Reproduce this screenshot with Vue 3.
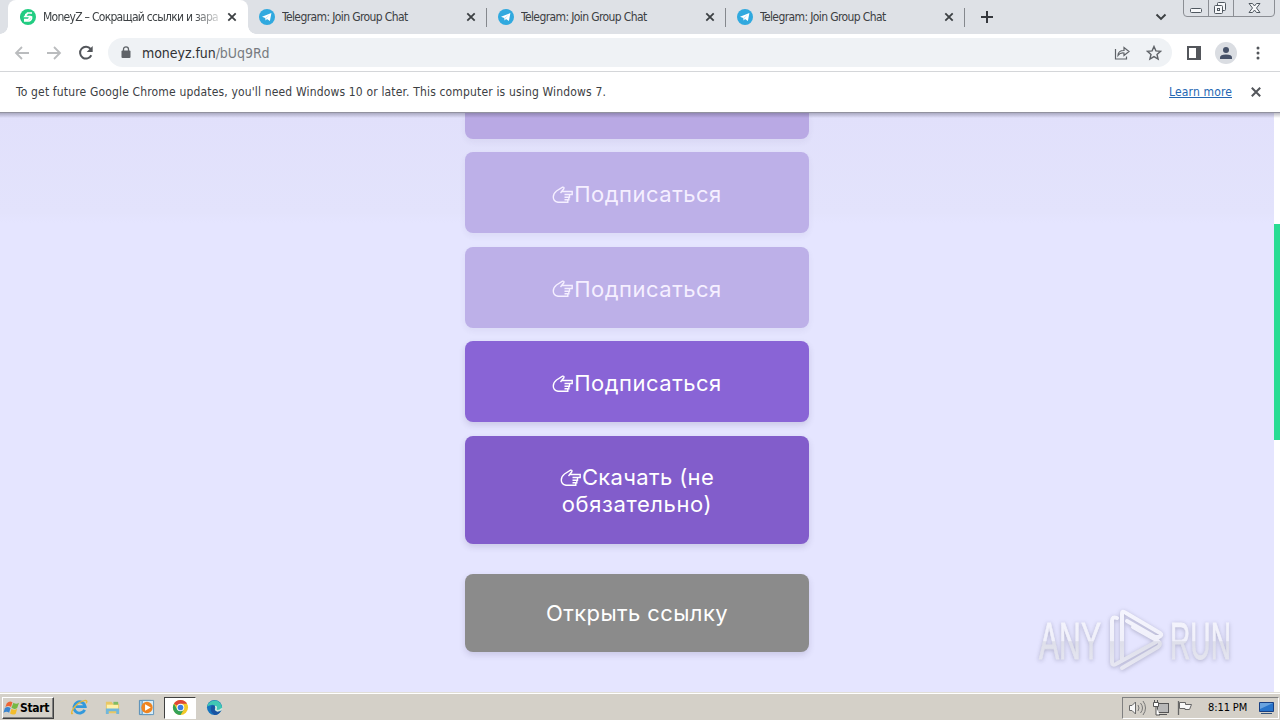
<template>
  <div class="screen">
    <header class="tab-strip">
      <div v-for="(tab, i) in tabs" :key="i" class="tab" :class="{ active: i === 0 }">
        <svg v-if="i === 0" class="favicon" viewBox="0 0 16 16">
          <circle cx="8" cy="8" r="8" fill="#22cd82" />
          <path d="M1 5A8 8 0 0 0 5 15 10 10 0 0 1 1 5" fill="#16ad77" />
          <path d="M12 4H7.5L5 7.5h4.5Q10 10 8 10.5H4M5 5.5h2M4 12h5q3-1 2.5-4L9 7.2" fill="none" stroke="#fff" stroke-width="1.7" />
        </svg>
        <svg v-else class="favicon" viewBox="0 0 16 16">
          <circle cx="8" cy="8" r="8" fill="#30a9df" />
          <path d="M3 7.8 12.4 4 10.9 12 8 10 6.7 11.4 6.2 8.9Z" fill="#fff" />
          <path d="M6.3 9 11 5.4 7.3 9.3 6.7 11.2Z" fill="#bddff1" />
        </svg>
        <span class="tab-title"><span :class="i === 0 ? 'title-ru' : 'title-en'">{{ tab }}</span></span>
        <svg class="tab-close" viewBox="0 0 10 10"><path d="m1.3 1.3 7.4 7.4m0-7.4L1.3 8.7" /></svg>
      </div>
      <svg class="new-tab" viewBox="0 0 14 14"><path d="M7 1v12M1 7h12" /></svg>
      <svg class="tab-search" viewBox="0 0 12 8"><path d="m1.5 1.5 4.5 4.4 4.5-4.4" /></svg>
      <div class="window-controls">
        <svg viewBox="0 0 94 17">
          <path d="M.5 0v13q0 3.5 3.5 3.5h84q3.5 0 3.5-3.5V0M25.500 0v16M50.500 0v16" fill="none" stroke="#8b8e94" />
          <g fill="#f7f8fa" stroke="#505860">
            <rect x="7.500" y="8.500" width="11" height="4" rx="1" />
            <rect x="34.500" y="2.500" width="8" height="8" rx="1" />
            <rect x="31.500" y="5.500" width="8" height="8" rx="1" />
            <rect x="34.500" y="8.500" width="2" height="2" />
            <path d="M66 3.500h3.500l2 2.500 2-2.500H77L73.500 8l3.500 4.500h-3.500l-2-2.500-2 2.500H66L69.500 8Z" />
          </g>
        </svg>
      </div>
    </header>

    <div class="toolbar">
      <svg class="nav" viewBox="0 0 16 16"><path d="M15 8H2m6-6L2 8l6 6" stroke="#babcbe" /></svg>
      <svg class="nav" viewBox="0 0 16 16"><path d="M1 8h13M8 2l6 6-6 6" stroke="#babcbe" /></svg>
      <svg class="nav" viewBox="0 0 16 16"><path d="M13.300 10.300A5.900 5.900 0 1 1 12.600 4" stroke="#53565b" stroke-width="2" /><path d="M14.700 1v6h-6Z" fill="#53565b" /></svg>
      <div class="address">
        <svg class="lock" viewBox="0 0 10 13"><rect x=".5" y="4.500" width="9" height="7.500" rx="1" fill="#5f6368" /><path d="M2.500 5V3.300a2.500 2.500 0 0 1 5 0V5" fill="none" stroke="#5f6368" stroke-width="1.300" /></svg>
        <span class="url">moneyz.fun<span class="path">/bUq9Rd</span></span>
        <svg class="share" viewBox="0 0 16 16"><path d="M1.500 4v10h11v-2.500M4 10.500q0-5 6-5V2.500l5 4-5 4V8Q6 7.500 4 10.500Z" fill="none" stroke="#5f6368" stroke-width="1.200" /></svg>
        <svg class="star" viewBox="0 0 16 16"><path d="m8 1.500 1.900 4.400 4.700.4L11 9.400l1.100 4.700L8 11.600l-4.100 2.500L5 9.400 1.400 6.300l4.700-.4Z" fill="none" stroke="#5f6368" stroke-width="1.400" /></svg>
      </div>
      <svg class="panel" viewBox="0 0 14 14"><path d="M1 1h12v12H1Z" fill="none" stroke="#53565b" stroke-width="2" /><path d="M9 0h5v14H9Z" fill="#53565b" /></svg>
      <svg class="avatar" viewBox="0 0 22 22"><circle cx="11" cy="11" r="11" fill="#dadde2" /><circle cx="11" cy="8" r="3" fill="#465168" /><path d="M5 17v-1.500q0-3 6-3t6 3V17Z" fill="#465168" /></svg>
      <svg class="menu" viewBox="0 0 4 14"><circle cx="2" cy="2" r="1.500" /><circle cx="2" cy="7" r="1.500" /><circle cx="2" cy="12" r="1.500" /></svg>
    </div>

    <div class="infobar">
      <span class="info-text">To get future Google Chrome updates, you'll need Windows 10 or later. This computer is using Windows 7.</span>
      <a class="learn">Learn more</a>
      <svg class="info-close" viewBox="0 0 10 10"><path d="m.8.8 8.400 8.400m0-8.400L.8 9.200" /></svg>
    </div>

    <main class="page">
      <div class="content">
        <div class="card clipped"></div>
        <div v-for="(card, i) in cards" :key="i" class="card" :class="card.kind">
          <p v-for="(line, n) in card.lines" :key="n">
            <svg v-if="card.hand && n === 0" class="hand" viewBox="0 0 22 18">
              <path d="M9 5.500H20.200V8.500H12.500M17.500 8.500V11.200H12.500M16.800 11.200V13.800H12.500M15.800 13.800V16.300H6Q1.300 15.500 1.300 11 1.300 7.500 4.500 5L10.500 1.200Q12.600.8 11.800 2.800L8.500 7" />
            </svg><span :class="card.kind + '-' + n">{{ line }}</span>
          </p>
        </div>
      </div>
      <div class="scrollbar"><div class="thumb"></div></div>
      <svg class="watermark" viewBox="0 0 200 70">
        <defs>
          <linearGradient id="silver" gradientUnits="userSpaceOnUse" x1="0" y1="0" x2="0" y2="66">
            <stop offset="0" stop-color="#f6f6fe" />
            <stop offset=".53" stop-color="#f0f0fa" />
            <stop offset=".54" stop-color="#dedfea" />
            <stop offset="1" stop-color="#e9e9f4" />
          </linearGradient>
        </defs>
        <g fill="none" stroke="url(#silver)" stroke-width="4" stroke-linejoin="round" stroke-linecap="round">
          <path d="M80 12Q75 10 75 15V56Q75 60 79 58L119 36M85 54V8Q85 4 89 7L123 27Q126 29 122 31H118L90 15M85 62 121 41Q125 38 121 35L96 21" />
        </g>
        <g fill="url(#silver)" stroke="url(#silver)" stroke-width=".8" class="mark-text">
          <text x="2" y="53" textLength="62" lengthAdjust="spacingAndGlyphs">ANY</text>
          <text x="133" y="53" textLength="61" lengthAdjust="spacingAndGlyphs">RUN</text>
        </g>
      </svg>
    </main>

    <footer class="taskbar">
      <div class="start">
        <svg viewBox="0 0 18 16"><path d="M4 3q3-3 6-1L8.500 7Q6 5 2.500 7Z" fill="#ed6535" /><path d="M11 2.500q3 2 6 0L15 8q-3 2-6-.3Z" fill="#76b843" /><path d="M2 8q3-2 6 0l-1.500 5Q4 11 .5 13Z" fill="#3a85cf" /><path d="M9 8.800q3 2 6 0L13.500 14q-3 2-6-.3Z" fill="#f3bd2d" /></svg>
        <span>Start</span>
      </div>
      <div class="task"><svg viewBox="0 0 18 18"><path d="M14.500 11.500A6 6 0 1 1 15 8H5" fill="none" stroke="#3299dc" stroke-width="3" /><path d="M2 15Q-1 17 2 11 7 3 15 1.500q3 0 1 3" fill="none" stroke="#e7b83b" stroke-width="1.400" /></svg></div>
      <div class="task"><svg viewBox="0 0 18 18"><path d="M2 3h6l1.500 2H16v10H2Z" fill="#e8c765" /><path d="M3 6h12v6H3Z" fill="#fff1a8" /><path d="M10 3h5v3h-5Z" fill="#7fbc64" /><path d="M2 10h14v6h-3v-3H5v3H2Z" fill="#71b7dc" /></svg></div>
      <div class="task"><svg viewBox="0 0 18 18"><path d="M1.500 1.500h12v15h-12Z" fill="#a7cee8" stroke="#528ab5" /><path d="M4.500 1.500h12v15h-12Z" fill="#d8edf8" stroke="#5c94bb" /><circle cx="9.500" cy="9" r="6" fill="#ef8420" /><path d="m7.500 5.500 6 3.500-6 3.500Z" fill="#fff" /></svg></div>
      <div class="task pressed"><svg viewBox="0 0 18 18"><circle cx="9" cy="9" r="8" fill="#f3c929" /><path d="M9 9 2.070 5A8 8 0 0 1 15.930 5H9Z" fill="#df4638" /><path d="M2.070 5A8 8 0 0 0 9 17l3.500-6L9 9 5.500 11Z" fill="#35a257" /><circle cx="9" cy="9" r="4" fill="#fff" /><circle cx="9" cy="9" r="3" fill="#3c7de2" /></svg></div>
      <div class="task"><svg viewBox="0 0 18 18"><circle cx="9" cy="9" r="8" fill="#1674bd" /><path d="M1.200 8A8 8 0 0 1 17 9q0 4-5 4-3 0-3-2 2-1 1-3-2-4-8.800 0Z" fill="#40c7b4" /><path d="M6 7q4-1 5 2-2 0-2 2 2 3 7 1-2 5-7 5-6-4-3-10Z" fill="#1953a2" /><path d="M9.500 8q2 0 1 2.500Q10 12 12 12.500q3 0 5-2.500" fill="none" stroke="#d3e8df" stroke-width="1.800" /></svg></div>
      <div class="tray">
        <svg class="tray-icon" viewBox="0 0 18 18"><path d="M1.500 6.500H4L7.500 3v12L4 11.500H1.500Z" fill="#f8f8f8" stroke="#696969" /><path d="M10 6q2 3 0 6m2.500-8q4 5 0 10m2.500-12q5 7 0 14" fill="none" stroke="#777" /></svg>
        <svg class="tray-icon net" viewBox="0 0 18 18"><rect x="5.500" y="4.500" width="11" height="9" fill="#b8b8b8" stroke="#555" /><path d="M7 15.500h8M1.500 3.500h5v4h-5ZM4 8v8h4M2.500 1v3m3-3v3" fill="#fff" stroke="#555" /></svg>
        <svg class="tray-icon flag" viewBox="0 0 18 18"><path d="M2.500 2v14" stroke="#666" stroke-width="1.300" /><path d="M3.500 3.500h6v2h6l-2 5H9v-1H3.500Z" fill="#f8f8f8" stroke="#666" /></svg>
        <span class="clock">8:11 PM</span>
        <svg class="desktop" viewBox="0 0 15 14"><path d="M.5 1.500h14v9H.5Z" fill="#2874ca" stroke="#183f82" /><path d="M1 2h13L1 8Z" fill="#69a3df" /><path d="M2 12.500h11" stroke="#35557b" /></svg>
      </div>
    </footer>
  </div>
</template>

<script setup>
const tabs = [
  'MoneyZ – Сокращай ссылки и зара',
  'Telegram: Join Group Chat',
  'Telegram: Join Group Chat',
  'Telegram: Join Group Chat'
]

const cards = [
  { kind: 'done', hand: true, lines: ['Подписаться'] },
  { kind: 'done', hand: true, lines: ['Подписаться'] },
  { kind: 'subscribe', hand: true, lines: ['Подписаться'] },
  { kind: 'download', hand: true, lines: ['Скачать (не', 'обязательно)'] },
  { kind: 'open', hand: false, lines: ['Открыть ссылку'] }
]
</script>

<style>
body {
  overflow: hidden;
}
</style>

<style scoped>
* {
  box-sizing: border-box;
}

svg {
  display: block;
  flex-shrink: 0;
}

.screen {
  width: 1280px;
  height: 720px;
  display: flex;
  flex-direction: column;
  overflow: hidden;
  font-family: "DejaVu Sans Condensed", "DejaVu Sans", sans-serif;
  font-size: 12px;
  color: #3c4043;
}

.tab-strip {
  height: 34px;
  display: flex;
  align-items: center;
  padding-left: 8px;
  background: #dee1e6;
}

.tab {
  position: relative;
  width: 239px;
  height: 34px;
  display: flex;
  align-items: center;
  padding-left: 12px;
}

.tab.active {
  width: 240px;
  margin-right: -1px;
  background: #fff;
  border-radius: 8px 8px 0 0;
}

.tab.active::before,
.tab.active::after {
  content: '';
  position: absolute;
  bottom: 0;
  left: -8px;
  width: 8px;
  height: 8px;
  background: radial-gradient(circle at 0 0, #dee1e6 7.5px, #fff 8px);
}

.tab.active::after {
  left: auto;
  right: -8px;
  background: radial-gradient(circle at 100% 0, #dee1e6 7.5px, #fff 8px);
}

.tab:not(.active)::after {
  content: '';
  position: absolute;
  right: -1px;
  top: 8px;
  width: 1px;
  height: 19px;
  background: #85888d;
}

.favicon {
  width: 16px;
  height: 16px;
}

.tab-title {
  width: 177px;
  margin-left: 7px;
  overflow: hidden;
  white-space: nowrap;
  line-height: 18px;
}

.active .tab-title {
  mask-image: linear-gradient(to right, #000 150px, transparent 182px);
}

.title-ru {
  letter-spacing: -0.72px;
}

.title-en {
  letter-spacing: -0.61px;
}

.tab-close {
  width: 10px;
  height: 10px;
  margin-left: 7px;
  stroke: #3c4043;
  stroke-width: 1.8;
}

.new-tab {
  width: 14px;
  height: 14px;
  margin-left: 16px;
  stroke: #35383d;
  stroke-width: 2;
}

.tab-search {
  width: 12px;
  height: 8px;
  margin-left: auto;
  fill: none;
  stroke: #3c4043;
  stroke-width: 2;
}

.window-controls {
  width: 97px;
  height: 34px;
  margin-left: 16px;
}

.window-controls svg {
  width: 94px;
  height: 17px;
}

.toolbar {
  height: 38px;
  display: flex;
  align-items: center;
  padding-left: 14px;
  background: #fff;
  border-bottom: 1px solid #d4d6d9;
}

.nav {
  width: 16px;
  height: 16px;
  margin-right: 16px;
  fill: none;
  stroke-width: 1.8;
}

.address {
  width: 1064px;
  height: 29px;
  display: flex;
  align-items: center;
  margin-left: -2px;
  padding-left: 13px;
  background: #eff2f5;
  border-radius: 15px;
}

.lock {
  width: 10px;
  height: 13px;
}

.url {
  margin-left: 11px;
  font-size: 14px;
  letter-spacing: -0.05px;
  line-height: 20px;
  color: #303134;
}

.path {
  color: #777b80;
}

.share {
  width: 16px;
  height: 16px;
  margin-left: auto;
}

.star {
  width: 16px;
  height: 16px;
  margin: 0 10px 0 16px;
}

.panel {
  width: 14px;
  height: 14px;
  margin-left: 15px;
}

.avatar {
  width: 22px;
  height: 22px;
  margin-left: 14px;
}

.menu {
  width: 4px;
  height: 14px;
  margin-left: 19px;
  fill: #53565b;
}

.infobar {
  height: 41px;
  display: flex;
  align-items: center;
  padding: 0 19px 1px 16px;
  background: #fff;
  border-bottom: 1px solid #92929f;
}

.info-text {
  white-space: nowrap;
  letter-spacing: 0.16px;
}

.learn {
  margin-left: auto;
  color: #2467b3;
  text-decoration: underline;
  letter-spacing: 0.14px;
}

.info-close {
  width: 10px;
  height: 10px;
  margin-left: 19px;
  stroke: #53565b;
  stroke-width: 2;
}

.page {
  position: relative;
  height: 579px;
  display: flex;
  background: linear-gradient(#e1e0fb, #e3e3fc 100px, #e5e5ff 110px);
  overflow: hidden;
}

.page::before {
  content: '';
  position: absolute;
  z-index: 1;
  top: 0;
  left: 0;
  width: 100%;
  height: 5px;
  background: linear-gradient(rgba(70, 70, 90, 0.35), transparent);
}

.content {
  width: 1274px;
  display: flex;
  flex-direction: column;
  align-items: center;
}

.card {
  width: 344px;
  height: 81px;
  flex-shrink: 0;
  display: flex;
  flex-direction: column;
  align-items: center;
  justify-content: center;
  padding-top: 4px;
  margin-bottom: 13.6px;
  border-radius: 8px;
  color: #fff;
  font-family: Inter, sans-serif;
  font-size: 22px;
  box-shadow: 0 3px 6px rgba(60, 50, 100, 0.16);
}

.card.clipped {
  height: 26px;
  margin-bottom: 13px;
  padding: 0;
  background: #b9a9e4;
  border-radius: 0 0 8px 8px;
  box-shadow: 0 3px 6px rgba(60, 50, 100, 0.06);
}

.card p {
  height: 27px;
  display: flex;
  align-items: center;
  margin: 0;
  line-height: 27px;
  white-space: nowrap;
}

.card.done {
  background: #bdb0e8;
  color: #f5efff;
  box-shadow: 0 3px 6px rgba(60, 50, 100, 0.06);
}

.card.subscribe {
  background: #8964d6;
}

.card.download {
  height: 108px;
  padding-top: 3px;
  margin-bottom: 30px;
  background: #825dcb;
}

.card.open {
  height: 78px;
  padding-top: 1px;
  margin-bottom: 0;
  background: #8b8b8b;
}

.hand {
  width: 22px;
  height: 18px;
  fill: none;
  stroke: currentColor;
  stroke-width: 1.4;
}

.done-0,
.subscribe-0 {
  letter-spacing: 0.5px;
}

.download-0 {
  letter-spacing: 0.35px;
}

.download-1 {
  letter-spacing: 0.6px;
}

.open-0 {
  letter-spacing: 0.4px;
}

.scrollbar {
  width: 6px;
  height: 579px;
  padding-top: 111px;
  background: #fff;
}

.thumb {
  height: 216px;
  background: #29dc93;
}

.watermark {
  position: absolute;
  left: 1037px;
  top: 493px;
  width: 200px;
  height: 70px;
  filter: drop-shadow(0 1px 2px rgba(80, 80, 110, 0.35));
}

.mark-text {
  font-family: "Liberation Sans", sans-serif;
  font-size: 52px;
}

.taskbar {
  height: 28px;
  display: flex;
  align-items: center;
  padding: 2px 1px 0;
  background: #d4d0c8;
  border-top: 1px solid #e1ded8;
  box-shadow: inset 0 1px #fff;
}

.start {
  width: 52px;
  height: 22px;
  display: flex;
  align-items: center;
  margin-left: 1px;
  border: 1px solid;
  border-color: #fff #404040 #404040 #fff;
  box-shadow: inset -1px -1px #808080;
  color: #000;
  font-size: 12px;
  font-weight: bold;
  letter-spacing: -0.3px;
}

.start svg {
  width: 17px;
  height: 16px;
}

.task {
  width: 32px;
  height: 22px;
  display: flex;
  align-items: center;
  justify-content: center;
  margin-left: 1.8px;
}

.start + .task {
  margin-left: 9px;
}

.task svg {
  width: 17px;
  height: 17px;
}

.task.pressed {
  background: #fff;
  border: 1px solid;
  border-color: #404040 #fff #fff #404040;
}

.tray {
  width: 157px;
  height: 22px;
  display: flex;
  align-items: center;
  margin-left: auto;
  padding-left: 5px;
  border: 1px solid;
  border-color: #808080 #fff #fff #808080;
}

.tray-icon {
  width: 18px;
  height: 18px;
}

.net,
.flag {
  margin-left: 6px;
}

.clock {
  width: 41px;
  margin-left: 14px;
  color: #000;
  font-size: 11px;
  letter-spacing: -0.1px;
  white-space: nowrap;
}

.desktop {
  width: 15px;
  height: 14px;
  margin-left: 10px;
}
</style>
